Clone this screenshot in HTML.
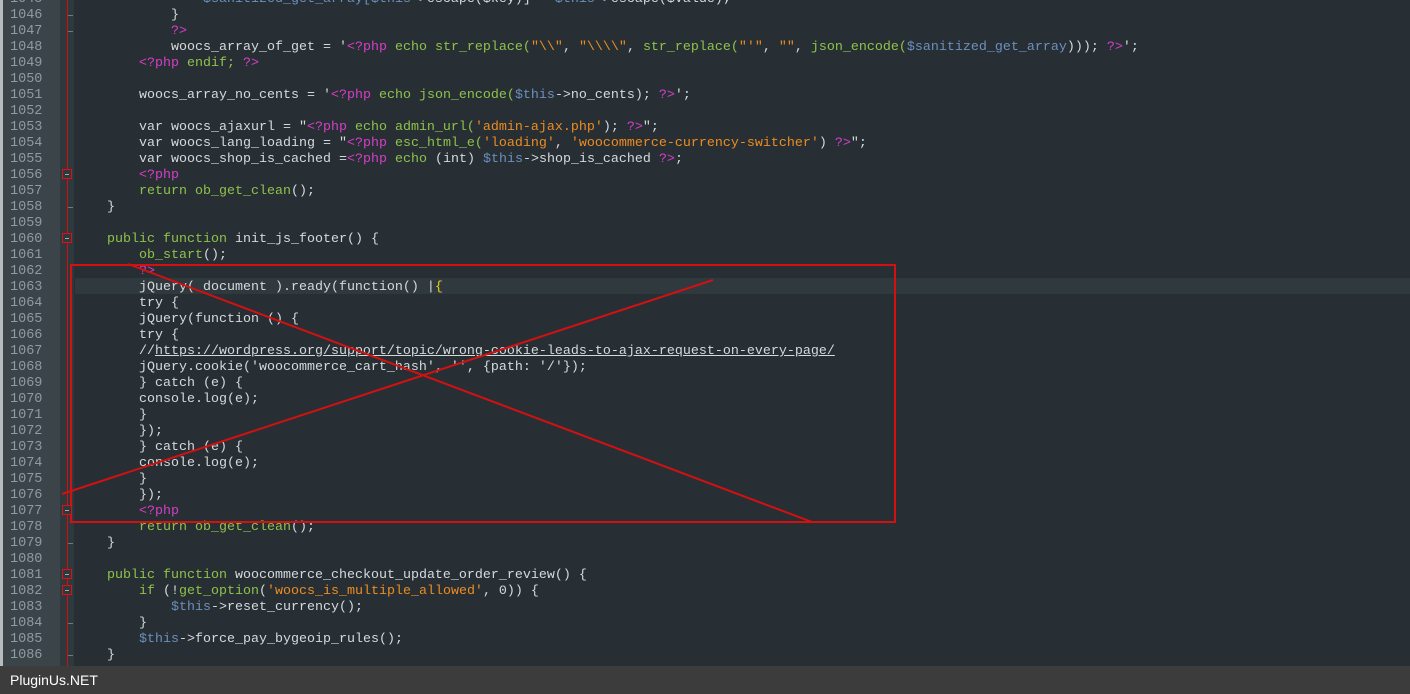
<!DOCTYPE html>
<html><head><meta charset="utf-8"><style>
body{margin:0;width:1410px;height:694px;overflow:hidden;background:#282f34;position:relative;font-family:"Liberation Mono",monospace}
#lb{position:absolute;left:0;top:0;width:3px;height:666px;background:#b8bcbe}
#gut{position:absolute;left:3px;top:0;width:57px;height:666px;background:#3a4449}
#fold{position:absolute;left:60px;top:0;width:14px;height:666px;background:#2f383d}
#vl{position:absolute;left:67px;top:0;width:1px;height:666px;background:#d01010;z-index:5}
.r{position:absolute;left:0;height:16px;line-height:20px;font-size:13.33px;white-space:pre;color:#d4dadc}
.n{position:absolute;left:10px;color:#8d9ca2;font-size:13.5px;line-height:20px}
.c{position:absolute;left:75px}
.k{color:#8ec24a}.p{color:#d43fc8}.s{color:#ec8c20}.v{color:#6b8fbf}
.fb{position:absolute;left:62px;width:10px;height:10px;border:1px solid #e01010;margin-top:3px;box-sizing:border-box;z-index:6;background:#2f383d}
.fb:after{content:"";position:absolute;left:2px;top:4px;width:4px;height:1px;background:#aaa}
.fd{position:absolute;left:68px;width:5px;height:1px;background:#777;margin-top:9px}
#hl{position:absolute;left:75px;top:278px;width:1335px;height:16px;background:#30393e}
#bar{position:absolute;left:0;top:666px;width:1410px;height:28px;background:#3c3c3c;color:#fff;font-family:"Liberation Sans",sans-serif;font-size:14px;line-height:28px;padding-left:10px;box-sizing:border-box}
#box{position:absolute;left:70px;top:264px;width:826px;height:259px;border:2px solid #d41010;box-sizing:border-box}
</style></head><body>
<div id="lb"></div><div id="gut"></div><div id="fold"></div><div id="hl"></div><div id="vl"></div>
<div class="r" style="top:-10px"><span class="n">1045</span><span class="c">                <span class="v">$sanitized_get_array[$this</span>->escape($key)] = <span class="v">$this</span>->escape($value);</span></div>
<div class="r" style="top:6px"><span class="n">1046</span><span class="fd"></span><span class="c">            }</span></div>
<div class="r" style="top:22px"><span class="n">1047</span><span class="fd"></span><span class="c">            <span class="p">?&gt;</span></span></div>
<div class="r" style="top:38px"><span class="n">1048</span><span class="c">            woocs_array_of_get = '<span class="p">&lt;?php</span> <span class="k">echo str_replace(</span><span class="s">"\\"</span>, <span class="s">"\\\\"</span>, <span class="k">str_replace(</span><span class="s">"'"</span>, <span class="s">""</span>, <span class="k">json_encode(</span><span class="v">$sanitized_get_array</span>))); <span class="p">?&gt;</span>';</span></div>
<div class="r" style="top:54px"><span class="n">1049</span><span class="c">        <span class="p">&lt;?php</span> <span class="k">endif;</span> <span class="p">?&gt;</span></span></div>
<div class="r" style="top:70px"><span class="n">1050</span></div>
<div class="r" style="top:86px"><span class="n">1051</span><span class="c">        woocs_array_no_cents = '<span class="p">&lt;?php</span> <span class="k">echo json_encode(</span><span class="v">$this</span>-&gt;no_cents); <span class="p">?&gt;</span>';</span></div>
<div class="r" style="top:102px"><span class="n">1052</span></div>
<div class="r" style="top:118px"><span class="n">1053</span><span class="c">        var woocs_ajaxurl = "<span class="p">&lt;?php</span> <span class="k">echo admin_url(</span><span class="s">'admin-ajax.php'</span>); <span class="p">?&gt;</span>";</span></div>
<div class="r" style="top:134px"><span class="n">1054</span><span class="c">        var woocs_lang_loading = "<span class="p">&lt;?php</span> <span class="k">esc_html_e(</span><span class="s">'loading'</span>, <span class="s">'woocommerce-currency-switcher'</span>) <span class="p">?&gt;</span>";</span></div>
<div class="r" style="top:150px"><span class="n">1055</span><span class="c">        var woocs_shop_is_cached =<span class="p">&lt;?php</span> <span class="k">echo</span> (int) <span class="v">$this</span>-&gt;shop_is_cached <span class="p">?&gt;</span>;</span></div>
<div class="r" style="top:166px"><span class="n">1056</span><span class="fb"></span><span class="c">        <span class="p">&lt;?php</span></span></div>
<div class="r" style="top:182px"><span class="n">1057</span><span class="c">        <span class="k">return ob_get_clean</span>();</span></div>
<div class="r" style="top:198px"><span class="n">1058</span><span class="fd"></span><span class="c">    }</span></div>
<div class="r" style="top:214px"><span class="n">1059</span></div>
<div class="r" style="top:230px"><span class="n">1060</span><span class="fb"></span><span class="c">    <span class="k">public function</span> init_js_footer() {</span></div>
<div class="r" style="top:246px"><span class="n">1061</span><span class="c">        <span class="k">ob_start</span>();</span></div>
<div class="r" style="top:262px"><span class="n">1062</span><span class="c">        <span class="p">?&gt;</span></span></div>
<div class="r" style="top:278px"><span class="n">1063</span><span class="c">        jQuery( document ).ready(function() |<span style="color:#e8d020">{</span></span></div>
<div class="r" style="top:294px"><span class="n">1064</span><span class="c">        try {</span></div>
<div class="r" style="top:310px"><span class="n">1065</span><span class="c">        jQuery(function () {</span></div>
<div class="r" style="top:326px"><span class="n">1066</span><span class="c">        try {</span></div>
<div class="r" style="top:342px"><span class="n">1067</span><span class="c">        //<u>https://wordpress.org/support/topic/wrong-cookie-leads-to-ajax-request-on-every-page/</u></span></div>
<div class="r" style="top:358px"><span class="n">1068</span><span class="c">        jQuery.cookie('woocommerce_cart_hash', '', {path: '/'});</span></div>
<div class="r" style="top:374px"><span class="n">1069</span><span class="c">        } catch (e) {</span></div>
<div class="r" style="top:390px"><span class="n">1070</span><span class="c">        console.log(e);</span></div>
<div class="r" style="top:406px"><span class="n">1071</span><span class="c">        }</span></div>
<div class="r" style="top:422px"><span class="n">1072</span><span class="c">        });</span></div>
<div class="r" style="top:438px"><span class="n">1073</span><span class="c">        } catch (e) {</span></div>
<div class="r" style="top:454px"><span class="n">1074</span><span class="c">        console.log(e);</span></div>
<div class="r" style="top:470px"><span class="n">1075</span><span class="c">        }</span></div>
<div class="r" style="top:486px"><span class="n">1076</span><span class="c">        });</span></div>
<div class="r" style="top:502px"><span class="n">1077</span><span class="fb"></span><span class="c">        <span class="p">&lt;?php</span></span></div>
<div class="r" style="top:518px"><span class="n">1078</span><span class="c">        <span class="k">return ob_get_clean</span>();</span></div>
<div class="r" style="top:534px"><span class="n">1079</span><span class="fd"></span><span class="c">    }</span></div>
<div class="r" style="top:550px"><span class="n">1080</span></div>
<div class="r" style="top:566px"><span class="n">1081</span><span class="fb"></span><span class="c">    <span class="k">public function</span> woocommerce_checkout_update_order_review() {</span></div>
<div class="r" style="top:582px"><span class="n">1082</span><span class="fb"></span><span class="c">        <span class="k">if</span> (!<span class="k">get_option</span>(<span class="s">'woocs_is_multiple_allowed'</span>, 0)) {</span></div>
<div class="r" style="top:598px"><span class="n">1083</span><span class="c">            <span class="v">$this</span>-&gt;reset_currency();</span></div>
<div class="r" style="top:614px"><span class="n">1084</span><span class="fd"></span><span class="c">        }</span></div>
<div class="r" style="top:630px"><span class="n">1085</span><span class="c">        <span class="v">$this</span>-&gt;force_pay_bygeoip_rules();</span></div>
<div class="r" style="top:646px"><span class="n">1086</span><span class="fd"></span><span class="c">    }</span></div>
<div id="box"></div>
<svg style="position:absolute;left:0;top:0" width="1410" height="666"><line x1="62" y1="494" x2="713" y2="280" stroke="#d41010" stroke-width="2"/><line x1="128" y1="264" x2="812" y2="522" stroke="#d41010" stroke-width="2"/></svg>
<div id="bar">PluginUs.NET</div>
</body></html>
